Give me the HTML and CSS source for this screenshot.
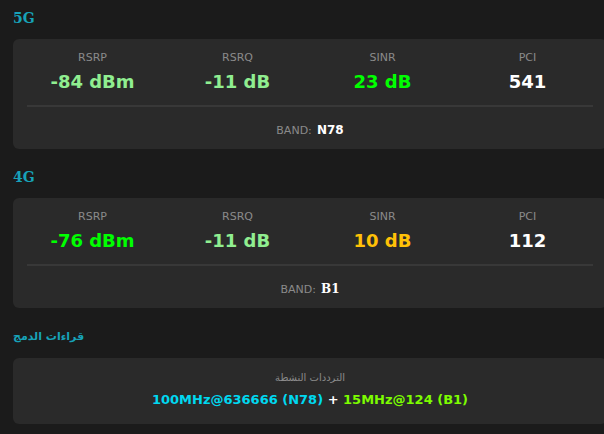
FILE: index.html
```html
<!DOCTYPE html>
<html lang="ar">
<head>
<meta charset="utf-8">
<title>Signal</title>
<link rel="stylesheet" href="styles.css">
</head>
<body dir="ltr">
<div class="page">
  <section class="section">
    <h2 class="title">5G</h2>
    <div class="card">
      <div class="metrics">
        <div class="metric"><div class="label">RSRP</div><div class="value light">-84 dBm</div></div>
        <div class="metric"><div class="label">RSRQ</div><div class="value light">-11 dB</div></div>
        <div class="metric"><div class="label">SINR</div><div class="value lime">23 dB</div></div>
        <div class="metric"><div class="label">PCI</div><div class="value white">541</div></div>
      </div>
      <div class="divider"></div>
      <div class="band"><span class="band-label">BAND:</span> <span class="band-value">N78</span></div>
    </div>
  </section>
  <section class="section">
    <h2 class="title">4G</h2>
    <div class="card">
      <div class="metrics">
        <div class="metric"><div class="label">RSRP</div><div class="value lime">-76 dBm</div></div>
        <div class="metric"><div class="label">RSRQ</div><div class="value light">-11 dB</div></div>
        <div class="metric"><div class="label">SINR</div><div class="value yellow">10 dB</div></div>
        <div class="metric"><div class="label">PCI</div><div class="value white">112</div></div>
      </div>
      <div class="divider"></div>
      <div class="band"><span class="band-label">BAND:</span> <span class="band-value serif">B1</span></div>
    </div>
  </section>
  <section class="section">
    <h2 class="title arabic" dir="rtl">قراءات الدمج</h2>
    <div class="card combo">
      <div class="combo-label" dir="rtl">الترددات النشطة</div>
      <div class="combo-value"><span class="cyan">100MHz@636666 (N78)</span> <span class="plus">+</span> <span class="chart">15MHz@124 (B1)</span></div>
    </div>
  </section>
</div>
</body>
</html>
```
FILE: styles.css
```css
html, body {
  margin: 0;
  padding: 0;
  overflow: hidden;
  background: #1b1b1b;
}
body {
  font-family: "DejaVu Sans", Verdana, sans-serif;
  color: #ffffff;
}
.page {
  padding: 10px 0 0 13px;
}
.section {
  margin-bottom: 20px;
}
.title {
  margin: 0 0 12px 0;
  font-family: "DejaVu Serif", serif;
  font-size: 14px;
  line-height: 17px;
  font-weight: bold;
  color: #17a2b8;
}
.title.arabic {
  font-family: "DejaVu Sans", sans-serif;
  font-size: 11px;
  font-weight: bold;
  text-align: left;
  margin-bottom: 13px;
}
.card {
  width: 594px;
  box-sizing: border-box;
  background: #2a2a2a;
  border-radius: 6px;
  padding: 12px 7px 10px 7px;
}
.metrics {
  display: grid;
  grid-template-columns: repeat(4, 1fr);
  text-align: center;
}
.label {
  font-size: 11px;
  line-height: 13px;
  color: #8a8a8a;
}
.value {
  margin-top: 7px;
  font-size: 18px;
  line-height: 22px;
  font-weight: bold;
}
.light { color: #90ee90; }
.lime { color: #00ff00; }
.yellow { color: #ffc107; }
.white { color: #ffffff; }
.divider {
  height: 2px;
  background: #383838;
  margin: 12px 7px 0 7px;
}
.band {
  margin-top: 14px;
  text-align: center;
  line-height: 16px;
}
.band-label {
  font-size: 11px;
  color: #8a8a8a;
}
.band-value {
  font-size: 12px;
  font-weight: bold;
  color: #ffffff;
}
.band-value.serif {
  font-family: "DejaVu Serif", serif;
}
.combo {
  text-align: center;
  padding: 13px 7px 15px 7px;
}
.combo-label {
  font-size: 10px;
  line-height: 14px;
  color: #8a8a8a;
}
.combo-value {
  margin-top: 6px;
  font-size: 13px;
  line-height: 18px;
  font-weight: bold;
}
.cyan { color: #00d8f0; }
.plus { color: #ffffff; }
.chart { color: #7cfc00; }
```
